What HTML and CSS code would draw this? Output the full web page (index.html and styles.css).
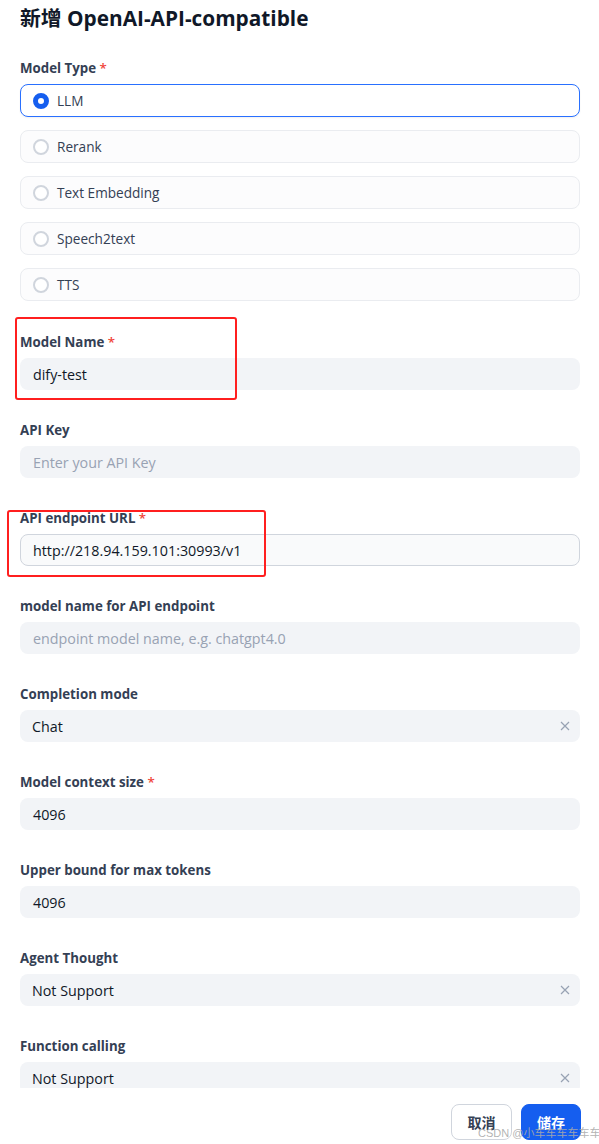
FILE: index.html
```html
<!DOCTYPE html>
<html lang="zh">
<head>
<meta charset="utf-8">
<title>新增 OpenAI-API-compatible</title>
<link rel="stylesheet" href="styles.css">
</head>
<body>
<div class="page">
  <div class="scroll">
    <h1 class="title">新增 OpenAI-API-compatible</h1>
    <div class="form">
      <div class="field">
        <div class="label">Model Type <span class="req">*</span></div>
        <div class="radios">
          <div class="radio selected"><span class="dot"></span><span>LLM</span></div>
          <div class="radio"><span class="dot"></span><span>Rerank</span></div>
          <div class="radio"><span class="dot"></span><span>Text Embedding</span></div>
          <div class="radio"><span class="dot"></span><span>Speech2text</span></div>
          <div class="radio"><span class="dot"></span><span>TTS</span></div>
        </div>
      </div>
      <div class="field">
        <div class="label">Model Name <span class="req">*</span></div>
        <div class="input">dify-test</div>
      </div>
      <div class="field">
        <div class="label">API Key</div>
        <div class="input placeholder">Enter your API Key</div>
      </div>
      <div class="field">
        <div class="label">API endpoint URL <span class="req">*</span></div>
        <div class="input bordered">http://218.94.159.101:30993/v1</div>
      </div>
      <div class="field">
        <div class="label">model name for API endpoint</div>
        <div class="input placeholder">endpoint model name, e.g. chatgpt4.0</div>
      </div>
      <div class="field">
        <div class="label">Completion mode</div>
        <div class="input select"><span>Chat</span><svg class="clear" width="10" height="10" viewBox="0 0 10 10"><path d="M1 1L9 9M9 1L1 9" stroke="#98a2b3" stroke-width="1.2" fill="none"/></svg></div>
      </div>
      <div class="field">
        <div class="label">Model context size <span class="req">*</span></div>
        <div class="input">4096</div>
      </div>
      <div class="field">
        <div class="label">Upper bound for max tokens</div>
        <div class="input">4096</div>
      </div>
      <div class="field">
        <div class="label">Agent Thought</div>
        <div class="input select"><span>Not Support</span><svg class="clear" width="10" height="10" viewBox="0 0 10 10"><path d="M1 1L9 9M9 1L1 9" stroke="#98a2b3" stroke-width="1.2" fill="none"/></svg></div>
      </div>
      <div class="field">
        <div class="label">Function calling</div>
        <div class="input select"><span>Not Support</span><svg class="clear" width="10" height="10" viewBox="0 0 10 10"><path d="M1 1L9 9M9 1L1 9" stroke="#98a2b3" stroke-width="1.2" fill="none"/></svg></div>
      </div>
    </div>
  </div>
  <div class="footer">
    <button class="btn cancel">取消</button>
    <button class="btn save">储存</button>
  </div>
  <div class="mark mark-name"></div>
  <div class="mark mark-url"></div>
  <div class="watermark">CSDN @小车车车车车车</div>
</div>
</body>
</html>
```

FILE: styles.css
```css
* { box-sizing: border-box; }
html, body { margin: 0; padding: 0; background: #ffffff; }
body {
  font-family: "Open Sans", "Noto Sans CJK SC", sans-serif;
  color: #101828;
  font-size: 14px;
}
.page {
  position: relative;
  width: 599px;
  height: 1144px;
  overflow: hidden;
}
.scroll {
  height: 1088px;
  overflow: hidden;
  padding: 4px 19px 0 20px;
}
.title {
  margin: 0;
  font-family: "Open Sans", "Noto Sans CJK SC", sans-serif;
  font-size: 20.8px;
  font-weight: 700;
  line-height: 28px;
  color: #101828;
}
.form {
  margin-top: 26px;
  display: flex;
  flex-direction: column;
  gap: 30px;
}
.field { display: flex; flex-direction: column; gap: 6px; }
.label {
  font-size: 13.3px;
  font-weight: 700;
  line-height: 20px;
  color: #344054;
}
.req { color: #f04438; font-weight: 600; }
.radios { display: flex; flex-direction: column; gap: 13px; margin-bottom: 1px; }
.radio {
  height: 33px;
  border: 1px solid #eaecf0;
  border-radius: 8px;
  background: #fcfcfd;
  display: flex;
  align-items: center;
  gap: 8px;
  padding-left: 12px;
  font-size: 13.6px;
  color: #344054;
}
.radio .dot {
  width: 16px;
  height: 16px;
  border-radius: 50%;
  border: 2px solid #d0d5dd;
  background: #fff;
  flex: none;
}
.radio.selected {
  border-color: #2970ff;
  background: #ffffff;
  box-shadow: 0 1px 2px rgba(16, 24, 40, 0.06);
}
.radio.selected .dot { border: 5px solid #155eef; }
.input {
  height: 32px;
  border-radius: 8px;
  background: #f2f4f7;
  display: flex;
  align-items: center;
  padding: 0 12px 0 13px;
  font-size: 14.3px;
  color: #101828;
}
.input.placeholder { color: #98a2b3; }
.input.bordered {
  height: 32px;
  border: 1px solid #d0d5dd;
  background: #f9fafb;
  padding-left: 12px;
}
.input.select { justify-content: space-between; padding-left: 12px; padding-right: 10px; }
.clear { flex: none; }
.footer {
  display: flex;
  justify-content: flex-end;
  gap: 9px;
  padding: 16px 18px 0 0;
}
.btn {
  height: 36px;
  border-radius: 8px;
  font-family: "Noto Sans CJK SC", sans-serif;
  font-size: 14px;
  font-weight: 700;
  padding: 0;
  cursor: pointer;
}
.cancel {
  width: 61px;
  background: #fff;
  border: 1px solid #d0d5dd;
  color: #344054;
}
.save {
  width: 60px;
  background: #155eef;
  border: 1px solid #155eef;
  color: #fff;
}
.mark {
  position: absolute;
  border: 2px solid #ff1f1f;
  border-radius: 3px;
}
.mark-name { left: 15px; top: 317px; width: 222px; height: 83px; }
.mark-url { left: 7px; top: 510px; width: 259px; height: 67px; }
.watermark {
  position: absolute;
  left: 478px;
  top: 1126px;
  font-family: "Liberation Sans", "Noto Sans CJK SC", sans-serif;
  font-size: 11px;
  line-height: 14px;
  color: rgba(170, 170, 170, 0.9);
  white-space: nowrap;
}
```
